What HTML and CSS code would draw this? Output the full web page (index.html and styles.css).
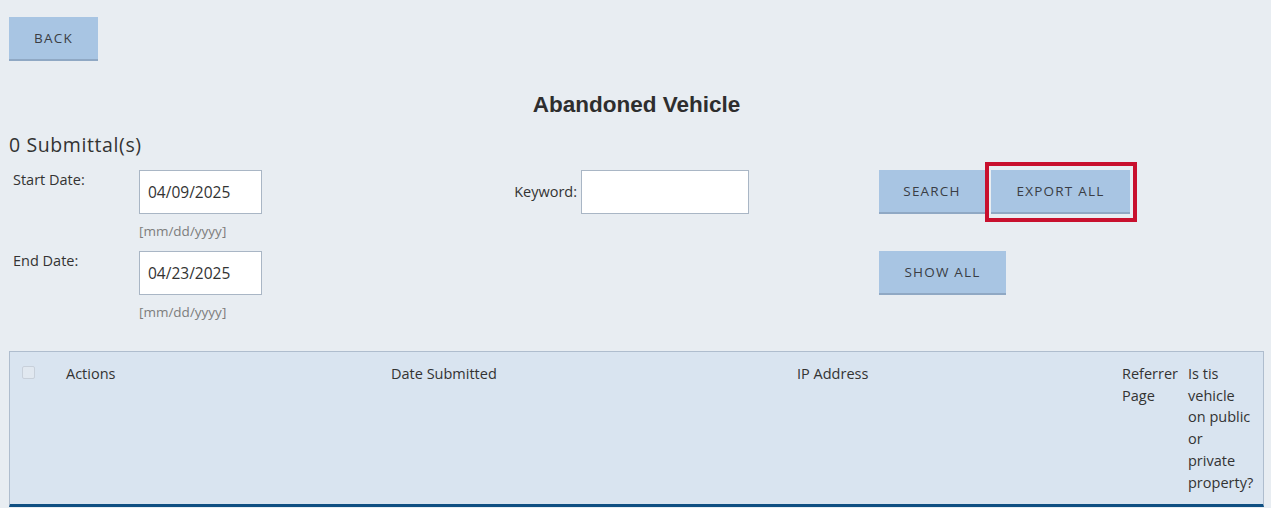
FILE: index.html
```html
<!DOCTYPE html>
<html>
<head>
<meta charset="utf-8">
<link rel="stylesheet" href="styles.css">
</head>
<body>
<div class="page">
  <div class="top">
    <button class="btn btn-back">BACK</button>
  </div>
  <h1 class="title">Abandoned Vehicle</h1>
  <div class="count">0 Submittal(s)</div>
  <div class="form">
    <div class="lbl">Start Date:</div>
    <div class="datecell">
      <input class="txt date" type="text" value="04/09/2025">
      <div class="hint">[mm/dd/yyyy]</div>
    </div>
    <div class="kwcell">
      <span class="kwlbl">Keyword:</span>
      <input class="txt kw" type="text" value="">
    </div>
    <div class="btncell">
      <button class="btn btn-search">SEARCH</button>
      <span class="hl"><button class="btn btn-export">EXPORT ALL</button></span>
    </div>

    <div class="lbl">End Date:</div>
    <div class="datecell">
      <input class="txt date" type="text" value="04/23/2025">
      <div class="hint">[mm/dd/yyyy]</div>
    </div>
    <div class="kwcell"></div>
    <div class="btncell">
      <button class="btn btn-show">SHOW ALL</button>
    </div>
  </div>

  <div class="table">
    <div class="th th-check"><span class="check"></span></div>
    <div class="th">Actions</div>
    <div class="th">Date Submitted</div>
    <div class="th">IP Address</div>
    <div class="th">Referrer Page</div>
    <div class="th th-last">Is tis vehicle on public or private property?</div>
  </div>
</div>
</body>
</html>
```

FILE: styles.css
```css
* { box-sizing: border-box; }
html, body { margin: 0; padding: 0; }
body {
  background: #e8edf2;
  font-family: "Open Sans", "Liberation Sans", sans-serif;
  color: #333;
}
.page {
  padding: 17px 7px 0 9px;
}
.top { height: 44px; }
.btn {
  font-family: "Open Sans", "Liberation Sans", sans-serif;
  font-size: 13.5px;
  letter-spacing: 1.2px;
  color: #3a3d44;
  background: #a8c5e3;
  border: none;
  border-bottom: 2px solid #8fa8c4;
  height: 44px;
  padding: 0;
  margin: 0;
  cursor: pointer;
}
.btn-back { width: 89px; }
.btn-search { width: 106px; }
.btn-export { width: 139px; display: block; }
.btn-show { width: 127px; }
.title {
  margin: 32px 0 0 0;
  text-align: center;
  font-family: "Liberation Sans", Arial, sans-serif;
  font-weight: bold;
  font-size: 22.5px;
  line-height: 24px;
  color: #2e2e2e;
}
.count {
  margin-top: 16px;
  font-size: 19.5px;
  letter-spacing: 0.6px;
  line-height: 24px;
  color: #333;
}
.form {
  margin-top: 13px;
  display: grid;
  grid-template-columns: 130px 372px 368px auto;
  grid-auto-rows: auto;
  row-gap: 10px;
}
.lbl {
  padding-left: 4px;
  font-size: 14.5px;
  line-height: 20px;
  color: #333;
}
.txt {
  font-family: "Open Sans", "Liberation Sans", sans-serif;
  font-size: 15.5px;
  color: #333;
  background: #fff;
  border: 1px solid #a9b6c5;
  height: 44px;
  padding: 0 8px;
  margin: 0;
  outline: none;
}
.date { width: 123px; display: block; }
.hint {
  margin-top: 7px;
  font-size: 13.5px;
  line-height: 20px;
  color: #7d7d7d;
}
.kwcell {
  display: flex;
  justify-content: flex-end;
  align-items: flex-start;
  padding-right: 130px;
}
.kwlbl {
  font-size: 14.5px;
  line-height: 44px;
  margin-right: 4px;
}
.kw { width: 168px; }
.btncell {
  display: flex;
  align-items: flex-start;
  gap: 6px;
}
.hl {
  position: relative;
  display: block;
}
.hl::after {
  content: "";
  position: absolute;
  left: -6px;
  right: -7px;
  top: -8px;
  bottom: -8px;
  border: 4px solid #c8102e;
  pointer-events: none;
}
.table {
  margin-top: 29px;
  background: #d9e4f0;
  border: 1px solid #afbdce;
  border-bottom: 3px solid #0f4f82;
  display: grid;
  grid-template-columns: 56px 325px 406px 325px 66px 1fr;
  padding: 11px 0 11px 0;
}
.th {
  font-size: 14.5px;
  line-height: 21.7px;
  color: #333;
  padding-right: 4px;
}
.th-last { max-width: 63px; padding-right: 0; }
.th-check { padding-left: 12px; padding-top: 3px; }
.check {
  display: block;
  width: 13px;
  height: 13px;
  border: 1px solid #c8d0da;
  border-radius: 2px;
  background: #e1e8f0;
}
```
